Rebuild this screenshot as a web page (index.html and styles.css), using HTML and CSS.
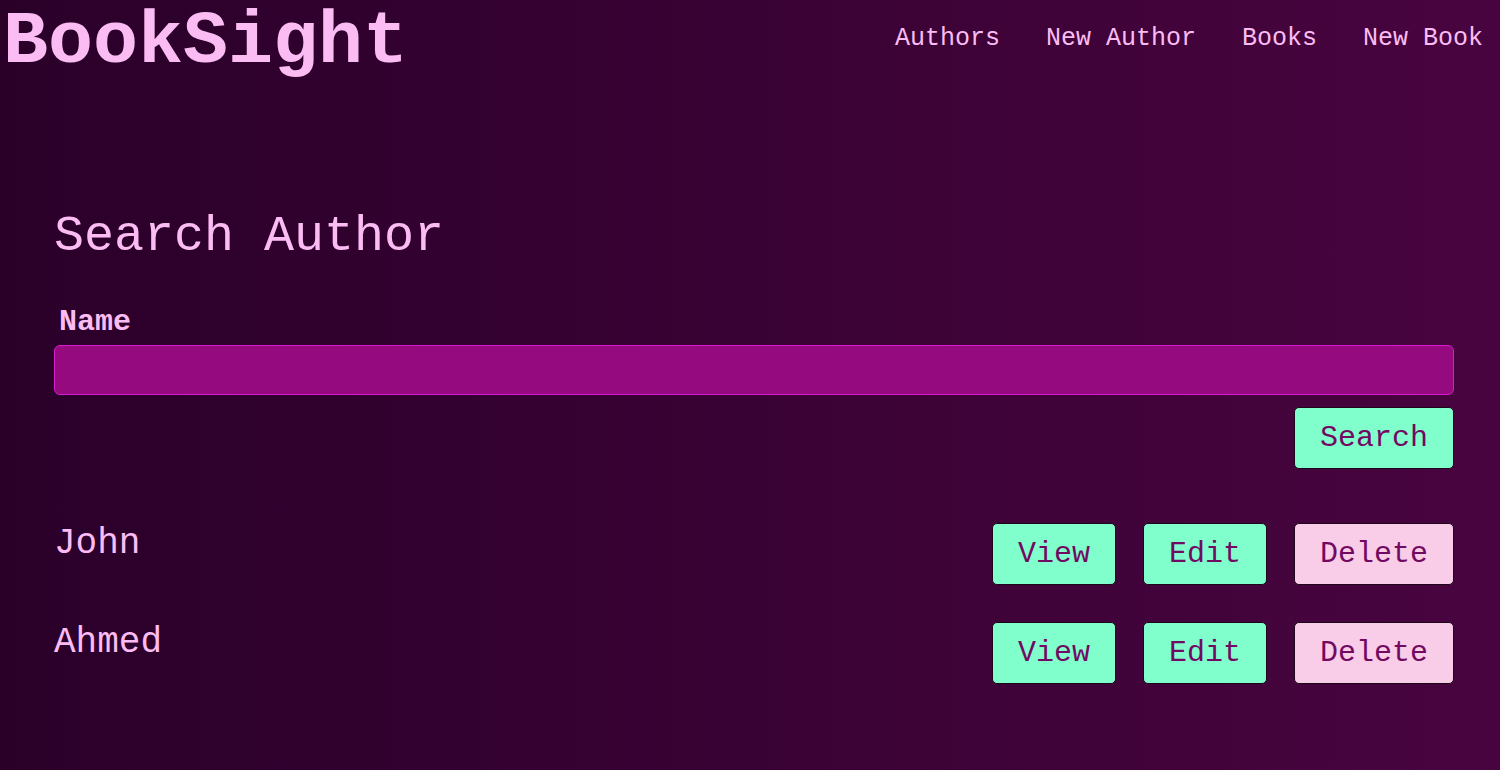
FILE: index.html
```html
<!DOCTYPE html>
<html>
<head>
<meta charset="utf-8">
<title>BookSight</title>
<link rel="stylesheet" href="styles.css">
</head>
<body>
<header class="topbar">
  <div class="brand">BookSight</div>
  <nav class="nav">
    <a class="nav-link" href="#">Authors</a>
    <a class="nav-link" href="#">New Author</a>
    <a class="nav-link" href="#">Books</a>
    <a class="nav-link" href="#">New Book</a>
  </nav>
</header>
<main class="content">
  <h2 class="page-title">Search Author</h2>
  <form class="search-form">
    <label class="field-label" for="name">Name</label>
    <input class="field-input" id="name" type="text">
    <div class="form-actions">
      <button class="btn btn-green" type="button">Search</button>
    </div>
  </form>
  <ul class="author-list">
    <li class="author-row">
      <span class="author-name">John</span>
      <div class="row-actions">
        <button class="btn btn-green" type="button">View</button>
        <button class="btn btn-green" type="button">Edit</button>
        <button class="btn btn-pink" type="button">Delete</button>
      </div>
    </li>
    <li class="author-row">
      <span class="author-name">Ahmed</span>
      <div class="row-actions">
        <button class="btn btn-green" type="button">View</button>
        <button class="btn btn-green" type="button">Edit</button>
        <button class="btn btn-pink" type="button">Delete</button>
      </div>
    </li>
  </ul>
</main>
</body>
</html>
```
FILE: styles.css
```css
html, body {
  margin: 0;
  padding: 0;
  height: 100%;
}
body {
  background: linear-gradient(to right, #2a0029, #48043f);
  color: #fbbcf4;
  font-family: "Liberation Mono", "Courier New", monospace;
  min-height: 770px;
}
.topbar {
  display: flex;
  justify-content: space-between;
  align-items: flex-start;
  padding: 0 17px 0 0;
}
.brand {
  font-size: 75px;
  font-weight: bold;
  line-height: normal;
  padding-left: 3px;
  color: #fbbcf4;
}
.nav {
  display: flex;
  gap: 46px;
  margin-top: 24px;
}
.nav-link {
  font-size: 25px;
  color: #fbbcf4;
  text-decoration: none;
}
.content {
  padding: 123px 46px 0 54px;
}
.page-title {
  margin: 0;
  font-size: 50px;
  font-weight: normal;
  line-height: normal;
}
.search-form {
  display: flex;
  flex-direction: column;
  margin-top: 40px;
}
.field-label {
  font-size: 30px;
  font-weight: bold;
  padding-left: 5px;
  line-height: normal;
}
.field-input {
  margin-top: 6px;
  height: 50px;
  box-sizing: border-box;
  background: #960a80;
  border: 1px solid #d81ad0;
  border-radius: 6px;
  outline: none;
  font-family: inherit;
  font-size: 24px;
  color: #fbbcf4;
  padding: 0 10px;
}
.form-actions {
  display: flex;
  justify-content: flex-end;
  margin-top: 12px;
}
.btn {
  font-family: inherit;
  font-size: 30px;
  line-height: 34px;
  padding: 13px 25px;
  border: 1px solid #1e0519;
  border-radius: 5px;
  color: #720a62;
  cursor: pointer;
}
.btn-green {
  background: #80ffcc;
}
.btn-pink {
  background: #f9cce8;
}
.author-list {
  list-style: none;
  margin: 54px 0 0 0;
  padding: 0;
  display: flex;
  flex-direction: column;
  gap: 37px;
}
.author-row {
  display: flex;
  justify-content: space-between;
  align-items: flex-start;
}
.author-name {
  font-size: 36px;
  line-height: normal;
}
.row-actions {
  display: flex;
  gap: 27px;
}
```
